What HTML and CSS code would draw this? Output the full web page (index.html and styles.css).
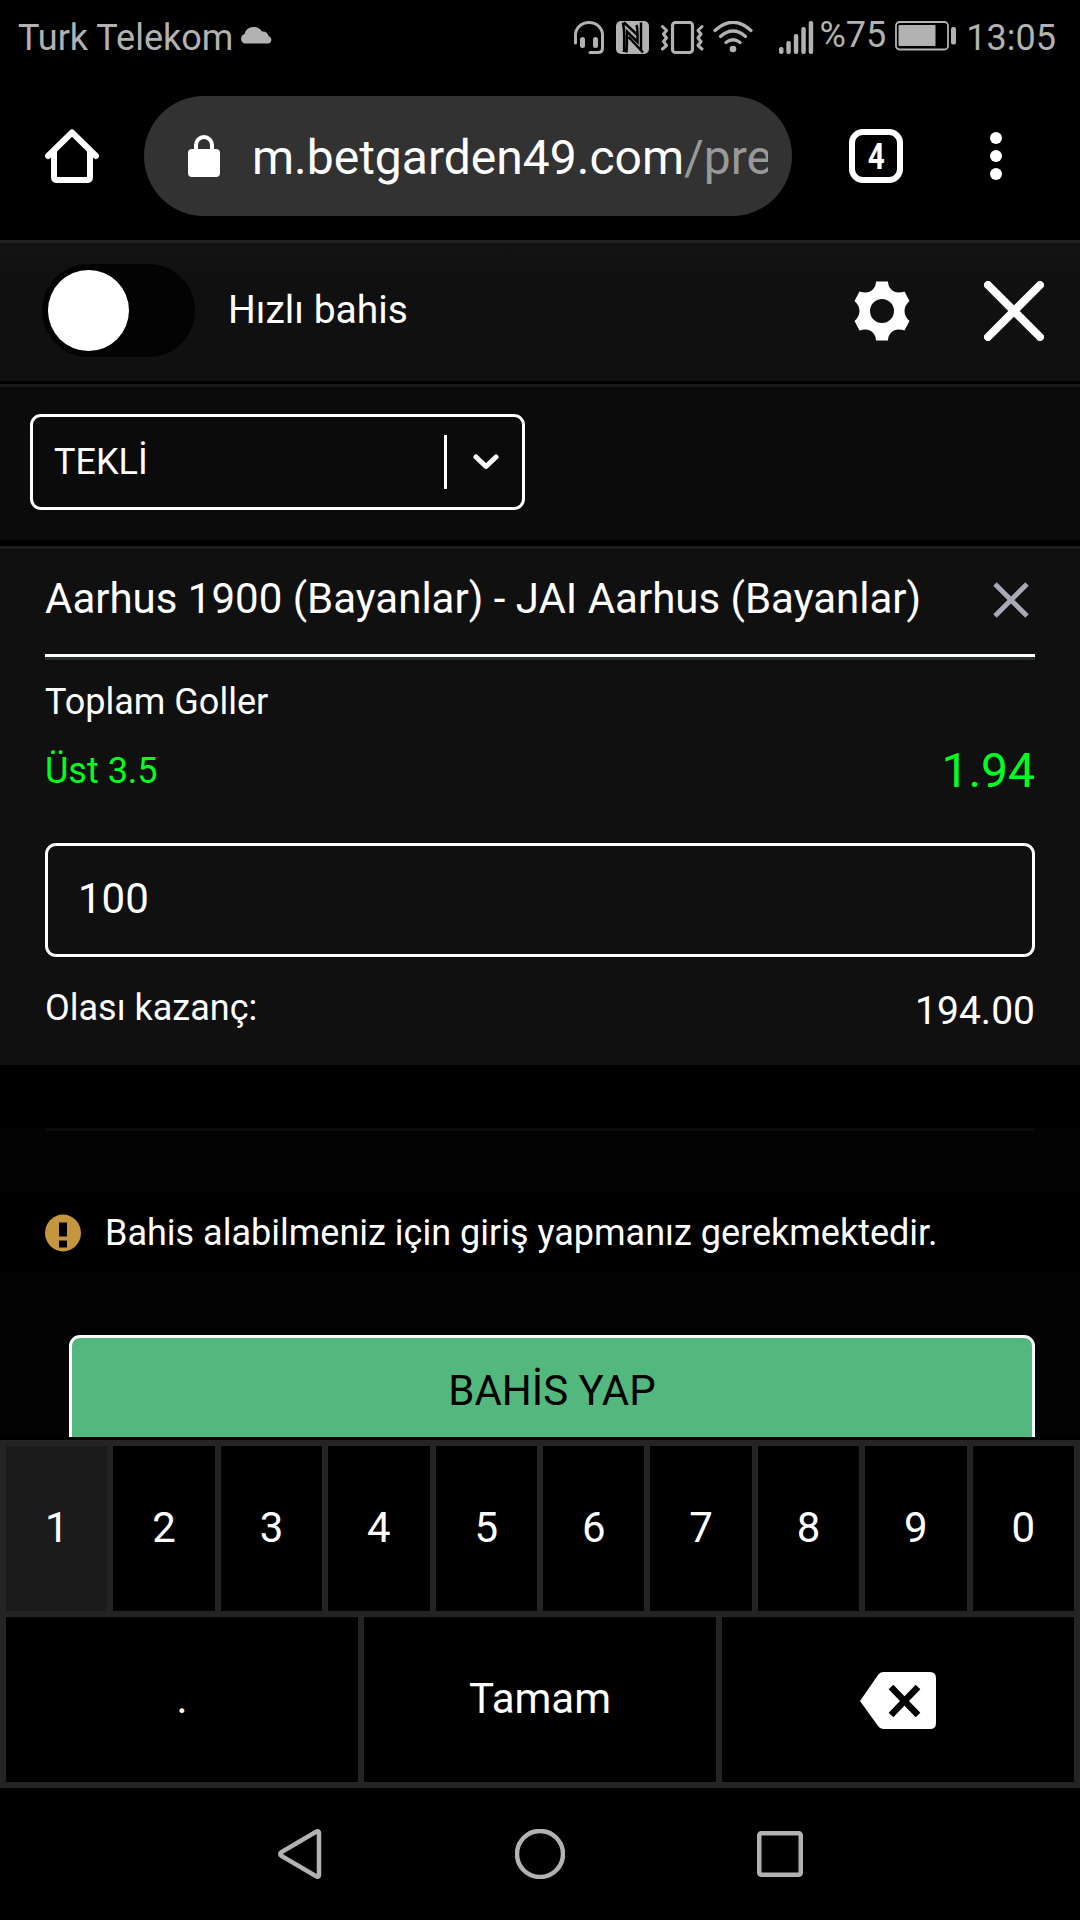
FILE: index.html
```html
<!DOCTYPE html>
<html lang="tr">
<head>
    <meta charset="UTF-8">
    <meta name="viewport" content="width=device-width, initial-scale=1.0">
    <title>Bahis Kuponu</title>
    <link rel="stylesheet" href="styles.css">
</head>
<body>

    <div class="status-bar">
        <span class="carrier">Turk Telekom</span>
        <svg class="cloud" width="34" height="19" viewBox="0 0 34 19"><path d="M5 18.500a5 5 0 0 1-.5-9.600A9.500 9 0 0 1 22 6.500a6 6 0 0 1 6.500 4.500A4 4 0 0 1 29 18.500z"/></svg>
        <div class="status-icons">
            <svg width="32" height="34" viewBox="0 0 32 34">
                <path class="line" d="M1.500 22V14a13.500 12.500 0 0 1 27 0v13q0 4.500-4.500 4.500h-8" stroke-width="3"/>
                <rect x="6" y="16" width="5" height="11" rx="2.500"/><rect x="19" y="16" width="5" height="11" rx="2.500"/>
            </svg>
            <svg class="nfc" width="33" height="34" viewBox="0 0 33 34">
                <rect width="33" height="33" rx="5"/>
                <path class="cut" d="M7 1.500Q8.200 8 8.200 16T8 31M10.500 31.500Q11 24 11 10.500L21.500 21V12Q21.500 7 20.500 4M12.500 16L27 31.500M25 1.500Q25 8 25 29M8 1.500L22 14.500"/>
            </svg>
            <svg class="vibrate" width="43" height="34" viewBox="0 0 43 34">
                <rect class="line" x="11.500" y="1.500" width="20" height="30" rx="3" stroke-width="3.200"/>
                <path class="line" d="M1.500 5.500l4 4-3 3.500 3 4-3 3.500 3 4-4 3.500M41 5.500l-4 4 3 3.500-3 4 3 3.500-3 4 4 3.500" stroke-width="3"/>
            </svg>
            <svg class="wifi" width="40" height="34" viewBox="0 0 40 34">
                <path class="line" d="M2 9.500Q20-7 38 9.500M7.500 15.500Q20 4.500 32.500 15.500M13 21.500Q20 16 27 21.500" stroke-width="3.200"/>
                <circle cx="20" cy="28" r="3.300"/>
            </svg>
            <svg class="signal" width="35" height="34" viewBox="0 0 35 34">
                <rect x="0" y="26" width="4.500" height="7" rx="2"/><rect x="7.300" y="20" width="4.500" height="13" rx="2"/><rect x="14.800" y="13" width="4.500" height="20" rx="2"/><rect x="22.300" y="6" width="4.500" height="27" rx="2"/><rect x="29.700" y="0" width="4.500" height="33" rx="2"/>
            </svg>
            <span class="percent">%75</span>
            <svg class="battery" width="62" height="30" viewBox="0 0 62 30">
                <rect class="line" x="1" y="1" width="52" height="27.500" rx="3.500" stroke-width="1.800"/>
                <rect x="3.500" y="4" width="37" height="21" rx="1"/>
                <rect x="56" y="6" width="5" height="17.500" rx="2"/>
            </svg>
            <span class="clock">13:05</span>
        </div>
    </div>

    <div class="browser-bar">
        <svg class="home" width="54" height="54" viewBox="0 0 54 54"><path d="M3 27L27 3.500 51 27M9 22v26q0 3 3 3h30q3 0 3-3V22"/></svg>
        <div class="address">
            <svg width="32" height="42" viewBox="0 0 32 42"><rect y="14" width="32" height="28" rx="4"/><path d="M8 16v-6a8 8 0 0 1 16 0v6"/></svg>
            <div class="url">m.betgarden49.com<span>/pre</span></div>
        </div>
        <div class="tabs"><span>4</span></div>
        <div class="menu"><i></i><i></i><i></i></div>
    </div>

    <div class="quick-bet">
        <div class="toggle"><div class="thumb"></div></div>
        <span>Hızlı bahis</span>
        <svg class="gear" width="56" height="60" viewBox="-28 -30 56 60">
            <path d="M-6-29.500H6C6-23 11-18.500 16.500-18.500Q20-18.500 22.500-19.500L27.500-10Q22.500-5.500 22.500 0T27.500 10L22.500 19.500Q20 18.500 16.500 18.500C11 18.500 6 23 6 29.500H-6C-6 23-11 18.500-16.500 18.500Q-20 18.500-22.500 19.500L-27.500 10Q-22.500 5.500-22.500 0T-27.500-10L-22.500-19.500Q-20-18.500-16.500-18.500C-11-18.500-6-23-6-29.500zM0-12A12 12 0 1 0 0 12 12 12 0 1 0 0-12z" fill-rule="evenodd"/>
        </svg>
        <svg class="close" width="60" height="60" viewBox="0 0 60 60"><path d="M4 4l52 52M56 4L4 56"/></svg>
    </div>

    <div class="bet-type">
        <div class="select">
            <span>TEKLİ</span>
            <svg width="26" height="16" viewBox="0 0 26 16"><path d="M3 3l10 9.500L23 3"/></svg>
        </div>
    </div>

    <div class="slip">
        <div class="match">
            <span>Aarhus 1900 (Bayanlar) - JAI Aarhus (Bayanlar)</span>
            <svg width="36" height="36" viewBox="0 0 36 36"><path d="M2 2l32 32M34 2L2 34"/></svg>
        </div>
        <div class="market">Toplam Goller</div>
        <div class="pick">
            <span class="selection">Üst 3.5</span>
            <span class="odds">1.94</span>
        </div>
        <div class="stake">100</div>
        <div class="winnings">
            <span>Olası kazanç:</span>
            <span class="amount">194.00</span>
        </div>
    </div>

    <div class="divider"></div>

    <div class="notice">
        <svg width="36" height="38" viewBox="0 0 36 38"><ellipse cx="18" cy="19" rx="18" ry="18.500"/><path d="M14 8.500h8V22.500h-8zM14 26.500h8v7h-8z"/></svg>
        <span>Bahis alabilmeniz için giriş yapmanız gerekmektedir.</span>
    </div>

    <div class="submit">
        <div class="submit-btn">BAHİS YAP</div>
    </div>

    <div class="keyboard">
        <div class="keys digits">
            <div class="key active">1</div>
            <div class="key">2</div>
            <div class="key">3</div>
            <div class="key">4</div>
            <div class="key">5</div>
            <div class="key">6</div>
            <div class="key">7</div>
            <div class="key">8</div>
            <div class="key">9</div>
            <div class="key">0</div>
        </div>
        <div class="keys actions">
            <div class="key">.</div>
            <div class="key">Tamam</div>
            <div class="key">
                <svg width="76" height="58" viewBox="0 0 76 58">
                    <path d="M0 29L18 3q2-3 5-3h47q6 0 6 6v45q0 6-6 6H23q-3 0-5-3z" fill="#fff"/>
                    <path d="M31 15l27 28M58 15l-27 28" stroke="#000" stroke-width="6.500"/>
                </svg>
            </div>
        </div>
    </div>

    <div class="nav-bar">
        <svg width="44" height="50" viewBox="0 0 44 50"><path d="M38.500 2.500Q41 1.500 41 4v42q0 2.500-2.500 1.500L3.500 27Q1 25 3.500 23z"/></svg>
        <svg width="50" height="50" viewBox="0 0 50 50"><circle cx="25" cy="25" r="23"/></svg>
        <svg width="46" height="46" viewBox="0 0 46 46"><rect x="2.250" y="2.250" width="41.500" height="41.500" rx="2"/></svg>
    </div>

</body>
</html>
```
FILE: styles.css
```css
* {
    box-sizing: border-box;
}

body {
    margin: 0;
    width: 1080px;
    height: 1920px;
    overflow: hidden;
    background: #000;
    color: #fff;
    font-family: Roboto, sans-serif;
    font-size: 36px;
    line-height: 42px;
}

svg {
    display: block;
    flex: none;
}

/* Phone status bar */
.status-bar {
    display: flex;
    align-items: center;
    height: 75px;
    padding: 0 24px 0 18px;
    color: #b2b2b2;
    fill: #b2b2b2;
}

.cloud {
    margin: 0 0 6px 7px;
}

.status-icons {
    display: flex;
    align-items: center;
    margin-left: auto;
}

.line {
    fill: none;
    stroke: #b2b2b2;
    stroke-linecap: round;
    stroke-linejoin: round;
}

.nfc {
    margin-left: 10px;
}

.cut {
    fill: none;
    stroke: #000;
    stroke-width: 2.5px;
}

.vibrate {
    margin-left: 12px;
}

.wifi {
    margin-left: 9px;
}

.signal {
    margin: 0 6px 0 26px;
}

.percent {
    margin-bottom: 6px;
}

.battery {
    margin: 0 9px 4px 9px;
}

/* Browser toolbar */
.browser-bar {
    display: flex;
    align-items: center;
    height: 165px;
    padding: 0 78px 3px 45px;
}

.home {
    fill: none;
    stroke: #fff;
    stroke-width: 6px;
    stroke-linecap: round;
    stroke-linejoin: round;
}

.address {
    display: flex;
    align-items: center;
    width: 648px;
    height: 120px;
    margin: 0 57px 0 45px;
    padding: 0 24px 0 44px;
    border-radius: 60px;
    background: #323232;
}

.address svg {
    fill: #fff;
}

.address path {
    fill: none;
    stroke: #fff;
    stroke-width: 4px;
}

.url {
    flex: 1;
    margin-left: 32px;
    padding-top: 3px;
    overflow: hidden;
    white-space: nowrap;
    font-size: 48px;
    line-height: 64px;
}

.url span {
    color: #999;
}

.tabs {
    display: flex;
    align-items: center;
    justify-content: center;
    width: 54px;
    height: 54px;
    padding-top: 2px;
    border: 6px solid #fff;
    border-radius: 14px;
    font-weight: 700;
}

.tabs span {
    transform: scaleX(0.82);
}

.menu {
    display: flex;
    flex-direction: column;
    gap: 6px;
    margin-left: auto;
}

.menu i {
    width: 12px;
    height: 12px;
    border-radius: 50%;
    background: #fff;
}

/* Quick bet header */
.quick-bet {
    display: flex;
    align-items: center;
    height: 144px;
    padding: 0 36px 0 42px;
    border-top: 3px solid #212121;
    border-bottom: 3px solid #000;
    background: linear-gradient(#131313, #101010 40px);
    font-size: 39px;
}

.toggle {
    width: 153px;
    height: 93px;
    margin-right: 33px;
    margin-bottom: 3px;
    padding: 6px;
    border-radius: 47px;
    background: #030303;
}

.thumb {
    width: 81px;
    height: 81px;
    border-radius: 50%;
    background: #fff;
}

.quick-bet span {
    margin-bottom: 4px;
}

.gear {
    margin: 0 74px 3px auto;
    fill: #fff;
}

.close {
    margin-bottom: 3px;
    stroke: #fff;
    stroke-width: 8px;
    stroke-linecap: round;
}

/* Bet type select */
.bet-type {
    height: 162px;
    padding: 27px 30px;
    border-top: 3px solid #1a1a1a;
    border-bottom: 6px solid #000;
    background: #0b0b0b;
}

.select {
    display: flex;
    align-items: center;
    width: 495px;
    height: 96px;
    padding: 0 23px 0 21px;
    border: 3px solid #fff;
    border-radius: 11px;
}

.select svg {
    box-sizing: content-box;
    padding: 19px 0 19px 26px;
    margin-left: auto;
    border-left: 3px solid #fff;
    fill: none;
    stroke: #fff;
    stroke-width: 5px;
    stroke-linecap: round;
    stroke-linejoin: round;
}

/* Coupon */
.slip {
    height: 519px;
    padding: 0 45px;
    border-top: 3px solid #1c1c1c;
    background: #101010;
}

.match {
    display: flex;
    align-items: center;
    justify-content: space-between;
    height: 108px;
    padding: 0 6px 4px 0;
    border-bottom: 3px solid #fff;
    box-shadow: 0 3px #28302b;
    font-size: 42px;
    white-space: nowrap;
}

.match span {
    margin-bottom: 2px;
}

.match path {
    stroke: #a6a9b6;
    stroke-width: 5px;
}

.market {
    margin-top: 24px;
}

.pick {
    display: flex;
    justify-content: space-between;
    height: 120px;
    padding-top: 20px;
    color: #00ff21;
}

.selection {
    margin-top: 7px;
}

.odds {
    font-size: 48px;
    line-height: 56px;
}

.stake {
    display: flex;
    align-items: center;
    height: 114px;
    padding: 0 30px 2px;
    border: 3px solid #fff;
    border-radius: 11px;
    font-size: 42px;
}

.winnings {
    display: flex;
    justify-content: space-between;
    padding-top: 30px;
}

.amount {
    margin-top: 3px;
    font-size: 39px;
}

.divider {
    height: 126px;
    padding: 63px 45px 0;
    background: linear-gradient(#000 63px, #030303 63px);
}

.divider::after {
    content: "";
    display: block;
    height: 3px;
    background: #0c0c0c;
}

.notice {
    display: flex;
    align-items: center;
    gap: 24px;
    height: 81px;
    padding: 2px 45px 0;
}

.notice ellipse {
    fill: #c4963e;
}

/* Button is cut off by the keyboard */
.submit {
    height: 165px;
    padding: 63px 45px 0 69px;
    overflow: hidden;
    background: #030303;
}

.submit-btn {
    display: flex;
    align-items: center;
    justify-content: center;
    height: 112px;
    border: 3px solid #fff;
    border-radius: 11px;
    background: #53b87d;
    color: #000;
    font-size: 42px;
}

/* Numeric keyboard */
.keyboard {
    display: flex;
    flex-direction: column;
    gap: 6px;
    margin-top: 3px;
    padding: 6px;
    background: #242424;
}

.keys {
    display: grid;
    gap: 6px;
    height: 165px;
}

.digits {
    grid-template-columns: repeat(10, 1fr);
}

.actions {
    grid-template-columns: repeat(3, 1fr);
}

.key {
    display: flex;
    align-items: center;
    justify-content: center;
    padding-bottom: 2px;
    background: #000;
    font-size: 42px;
}

.key.active {
    background: #1b1b1b;
}

.key svg {
    margin-top: 4px;
}

/* Android navigation */
.nav-bar {
    display: flex;
    align-items: center;
    justify-content: space-between;
    height: 132px;
    padding: 0 277px 0 278px;
    fill: none;
    stroke: #b2b2b2;
    stroke-width: 4.5px;
}
```
